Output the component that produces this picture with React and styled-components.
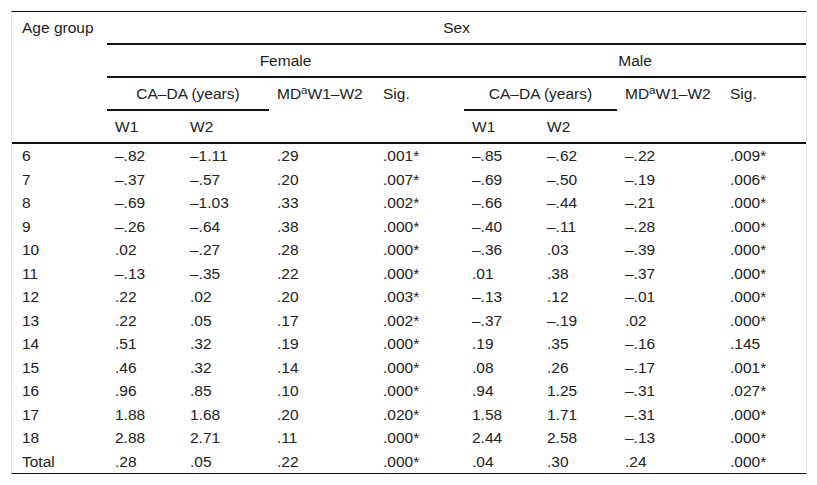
import styled, { createGlobalStyle } from 'styled-components';

const GlobalStyle = createGlobalStyle`
    body {
        margin: 0;
        background: #ffffff;
        font-family: "Liberation Sans", Arial, sans-serif;
    }
`;

const widths = [95, 75, 87, 106, 89, 75, 78, 105, 84];

const rows = [
    ['6', '–.82', '–1.11', '.29', '.001*', '–.85', '–.62', '–.22', '.009*'],
    ['7', '–.37', '–.57', '.20', '.007*', '–.69', '–.50', '–.19', '.006*'],
    ['8', '–.69', '–1.03', '.33', '.002*', '–.66', '–.44', '–.21', '.000*'],
    ['9', '–.26', '–.64', '.38', '.000*', '–.40', '–.11', '–.28', '.000*'],
    ['10', '.02', '–.27', '.28', '.000*', '–.36', '.03', '–.39', '.000*'],
    ['11', '–.13', '–.35', '.22', '.000*', '.01', '.38', '–.37', '.000*'],
    ['12', '.22', '.02', '.20', '.003*', '–.13', '.12', '–.01', '.000*'],
    ['13', '.22', '.05', '.17', '.002*', '–.37', '–.19', '.02', '.000*'],
    ['14', '.51', '.32', '.19', '.000*', '.19', '.35', '–.16', '.145'],
    ['15', '.46', '.32', '.14', '.000*', '.08', '.26', '–.17', '.001*'],
    ['16', '.96', '.85', '.10', '.000*', '.94', '1.25', '–.31', '.027*'],
    ['17', '1.88', '1.68', '.20', '.020*', '1.58', '1.71', '–.31', '.000*'],
    ['18', '2.88', '2.71', '.11', '.000*', '2.44', '2.58', '–.13', '.000*'],
    ['Total', '.28', '.05', '.22', '.000*', '.04', '.30', '.24', '.000*'],
];

function MeanDiff() {
    return (
        <>
            MD<Sup>a</Sup>W1–W2
        </>
    );
}

function App() {
    return (
        <Page>
            <GlobalStyle />
            <Frame>
                <Table>
                    <colgroup>
                        {widths.map((w, i) => (
                            <col key={i} style={{ width: w }} />
                        ))}
                    </colgroup>
                    <thead>
                        <tr>
                            <HeadCell rowSpan={4} $first>
                                Age group
                            </HeadCell>
                            <HeadCell colSpan={8} $center $rule>
                                Sex
                            </HeadCell>
                        </tr>
                        <tr>
                            <HeadCell colSpan={4} $center $rule>
                                Female
                            </HeadCell>
                            <HeadCell colSpan={4} $center $rule>
                                Male
                            </HeadCell>
                        </tr>
                        <tr>
                            <HeadCell colSpan={2} $center $rule>
                                CA–DA (years)
                            </HeadCell>
                            <HeadCell rowSpan={2}>
                                <MeanDiff />
                            </HeadCell>
                            <HeadCell rowSpan={2}>Sig.</HeadCell>
                            <HeadCell colSpan={2} $center $rule>
                                CA–DA (years)
                            </HeadCell>
                            <HeadCell rowSpan={2}>
                                <MeanDiff />
                            </HeadCell>
                            <HeadCell rowSpan={2}>Sig.</HeadCell>
                        </tr>
                        <tr>
                            <HeadCell>W1</HeadCell>
                            <HeadCell>W2</HeadCell>
                            <HeadCell>W1</HeadCell>
                            <HeadCell>W2</HeadCell>
                        </tr>
                    </thead>
                    <Body>
                        {rows.map(row => (
                            <tr key={row[0]}>
                                {row.map((cell, i) => (
                                    <Cell key={i} $first={i === 0}>
                                        {cell}
                                    </Cell>
                                ))}
                            </tr>
                        ))}
                    </Body>
                </Table>
            </Frame>
        </Page>
    );
}

export default App;

const Page = styled.div`
    padding: 11px 0 0 11px;
`;

const Frame = styled.div`
    width: 794px;
    border-top: 1px solid #111111;
    border-bottom: 1px solid #111111;
    border-left: 1px solid #e6e6e6;
    border-right: 1px solid #e6e6e6;
`;

const Table = styled.table`
    width: 794px;
    table-layout: fixed;
    border-collapse: collapse;
    font-size: 15.5px;
    color: #222222;
`;

const HeadCell = styled.th`
    font-weight: 400;
    text-align: ${p => (p.$center ? 'center' : 'left')};
    vertical-align: top;
    white-space: nowrap;
    line-height: 21px;
    padding: 5px 8px 5px ${p => (p.$first ? '10px' : '8px')};
    border-bottom: ${p => (p.$rule ? '2px solid #111111' : 'none')};
`;

const Sup = styled.sup`
    font-size: 11.5px;
    line-height: 0;
    vertical-align: 5px;
`;

const Body = styled.tbody`
    border-top: 2px solid #111111;
`;

const Cell = styled.td`
    white-space: nowrap;
    line-height: 21.5px;
    padding: 1px 8px 1px ${p => (p.$first ? '10px' : '8px')};
    vertical-align: middle;
`;
